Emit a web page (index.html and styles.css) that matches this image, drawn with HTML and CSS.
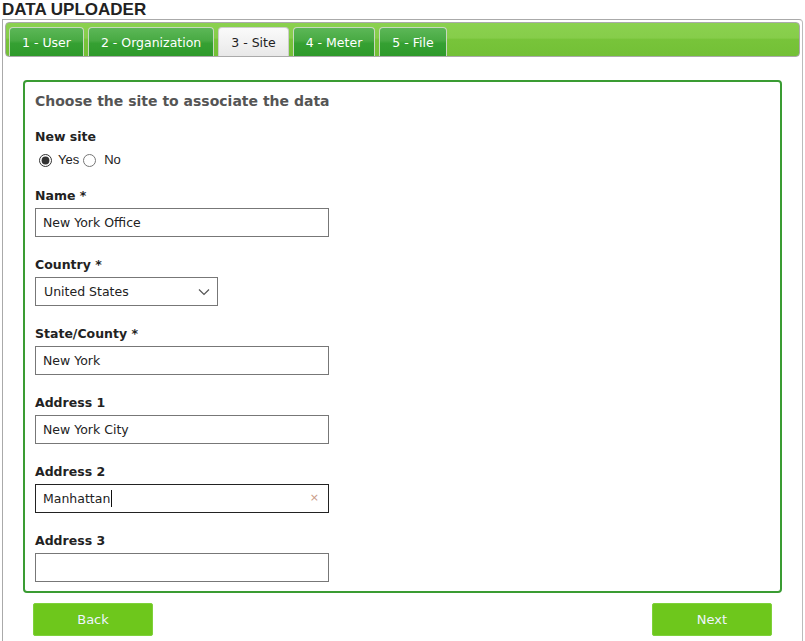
FILE: index.html
```html
<!DOCTYPE html>
<html lang="en">
<head>
    <meta charset="UTF-8">
    <meta name="viewport" content="width=device-width, initial-scale=1.0">
    <title>Data Uploader</title>
    <link rel="stylesheet" href="styles.css">
</head>
<body>
    <h1 class="page-title">DATA UPLOADER</h1>

    <div class="wizard">
        <ul class="tabs">
            <li class="tab">1 - User</li>
            <li class="tab">2 - Organization</li>
            <li class="tab active">3 - Site</li>
            <li class="tab">4 - Meter</li>
            <li class="tab">5 - File</li>
        </ul>

        <div class="panel">
            <form class="site-form">
                <h2>Choose the site to associate the data</h2>

                <div class="form-group radio-group">
                    <label class="field-label">New site</label>
                    <div class="radios">
                        <label><input type="radio" name="newsite" checked> Yes</label>
                        <label><input type="radio" name="newsite"> No</label>
                    </div>
                </div>

                <div class="form-group">
                    <label class="field-label" for="name">Name *</label>
                    <input type="text" id="name" class="text-input" value="New York Office">
                </div>

                <div class="form-group">
                    <label class="field-label" for="country">Country *</label>
                    <div class="select-box">
                        <span>United States</span>
                        <svg width="12" height="8" viewBox="0 0 12 8"><path d="M1 1.5 6 6.5 11 1.5" fill="none" stroke="#555" stroke-width="1.2"/></svg>
                    </div>
                </div>

                <div class="form-group">
                    <label class="field-label" for="state">State/County *</label>
                    <input type="text" id="state" class="text-input" value="New York">
                </div>

                <div class="form-group">
                    <label class="field-label" for="addr1">Address 1</label>
                    <input type="text" id="addr1" class="text-input" value="New York City">
                </div>

                <div class="form-group">
                    <label class="field-label" for="addr2">Address 2</label>
                    <div class="text-input focused">
                        <span>Manhattan</span><span class="caret"></span>
                        <span class="clear">&times;</span>
                    </div>
                </div>

                <div class="form-group">
                    <label class="field-label" for="addr3">Address 3</label>
                    <input type="text" id="addr3" class="text-input" value="">
                </div>
            </form>

            <div class="actions">
                <button type="button" class="btn">Back</button>
                <button type="button" class="btn">Next</button>
            </div>
        </div>
    </div>
</body>
</html>
```

FILE: styles.css
```css
* {
    box-sizing: border-box;
    margin: 0;
    padding: 0;
}

body {
    font-family: "DejaVu Sans", Verdana, sans-serif;
    font-size: 12.5px;
    color: #222;
    background: white;
    padding: 0 2px;
}

.page-title {
    font-family: "Liberation Sans", Arial, sans-serif;
    font-size: 17px;
    font-weight: bold;
    color: #222;
    line-height: 19px;
    height: 19px;
}

.wizard {
    border: 1px solid #aaa;
    border-right-color: #bbb;
    border-bottom: none;
    border-radius: 0 4px 0 0;
    padding: 2px 2px 0 2px;
    height: 622px;
}

.tabs {
    list-style: none;
    display: flex;
    gap: 4px;
    height: 35px;
    padding: 4px 3px 0 3px;
    border: 1px solid #aaa;
    border-radius: 4px;
    background: linear-gradient(to bottom, #8bd14f 0%, #86cd4a 45%, #78c43a 50%, #73c036 100%);
}

.tab {
    height: 29px;
    padding: 0 12px;
    line-height: 29px;
    font-size: 12.5px;
    color: white;
    border: 1px solid #c8d8c0;
    border-bottom: none;
    border-radius: 4px 4px 0 0;
    background: linear-gradient(to bottom, #5cb757 0%, #48aa43 45%, #35a032 55%, #2e9a2b 100%);
}

.tab.active {
    color: #222;
    background: linear-gradient(to bottom, #fafafa 0%, #f0f0f0 60%, #e8e8e8 100%);
    border-color: #ccc;
}

.panel {
    padding: 23px 18px 0 18px;
}

.site-form {
    border: 2px solid #3a9c33;
    border-radius: 4px;
    padding: 10px 10px 10px 10px;
    height: 513px;
}

.site-form h2 {
    font-size: 14px;
    color: #555;
    font-weight: bold;
    line-height: 18px;
    margin-bottom: 19px;
}

.form-group {
    margin-bottom: 20px;
}

.field-label {
    display: block;
    font-weight: bold;
    line-height: 16px;
    margin-bottom: 4px;
}

.radios {
    display: flex;
    font-family: "Liberation Sans", Arial, sans-serif;
    font-size: 13px;
    line-height: 16px;
    padding: 3px 0 0 4px;
}

.radios label {
    display: flex;
    align-items: center;
}

.radios input {
    width: 13px;
    height: 13px;
    margin: 0 6px 0 0;
    accent-color: #333;
}

.radios label + label input {
    margin-left: 4px;
    margin-right: 8px;
}

.text-input {
    display: flex;
    align-items: center;
    width: 294px;
    height: 29px;
    padding: 0 7px;
    border: 1px solid #777;
    font-family: "DejaVu Sans", Verdana, sans-serif;
    font-size: 12.5px;
    color: #222;
    background: white;
}

.text-input.focused {
    border-color: #222;
    position: relative;
}

.caret {
    display: inline-block;
    width: 1px;
    height: 17px;
    background: #111;
    margin-left: 1px;
}

.clear {
    position: absolute;
    right: 9px;
    top: 6px;
    font-size: 11px;
    color: #c99a88;
}

.select-box {
    display: flex;
    align-items: center;
    justify-content: space-between;
    width: 183px;
    height: 29px;
    padding: 0 7px 0 8px;
    border: 1px solid #777;
}

.actions {
    display: flex;
    justify-content: space-between;
    padding: 10px 10px 0 10px;
}

.btn {
    width: 120px;
    height: 33px;
    border: 1px solid #7fd13a;
    border-radius: 2px;
    background: #6ec71c;
    color: #eef4ff;
    font-family: "DejaVu Sans", Verdana, sans-serif;
    font-size: 13px;
}
```
